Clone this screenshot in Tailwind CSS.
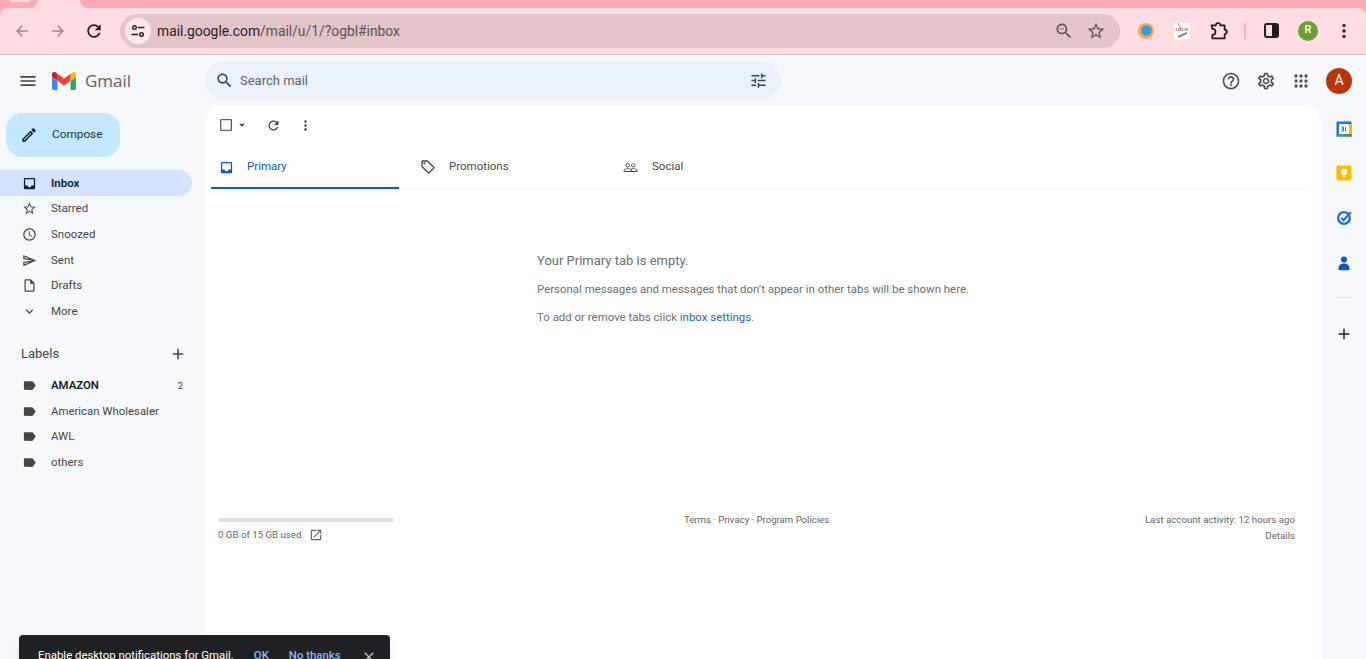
<!DOCTYPE html>
<html lang="en">
<head>
    <meta charset="UTF-8">
    <title>Inbox - Gmail</title>
    <script src="https://cdn.jsdelivr.net/npm/@tailwindcss/browser@4"></script>
</head>
<body class="bg-[#f6f8fc]">
<div class="relative flex h-[659px] w-[1366px] flex-col overflow-hidden font-['Roboto',sans-serif] antialiased">

    <div class="flex-none bg-[#ffa9b8]">
        <!-- tab strip -->
        <div class="flex h-2 bg-[#ffdce2]">
            <div class="h-full w-[38px] flex-none rounded-br-lg bg-[#ffa9b8]"><div class="ml-[10px] h-[2px] w-5 rounded-b-lg bg-[#ffdce2]"></div></div>
            <div class="w-[42px] flex-none"></div>
            <div class="flex-1 rounded-bl-lg bg-[#ffa9b8]"></div>
        </div>

        <!-- browser toolbar -->
        <div class="flex h-[47px] items-center rounded-t-lg border-b border-[#d9b8be] bg-[#ffdce2] pb-[1px]">
            <svg class="ml-[13px] h-[18px] w-[18px] fill-[#9c8a8e]" viewBox="0 0 24 24"><path d="M20 11H7.830l5.590-5.590L12 4l-8 8 8 8 1.410-1.410L7.830 13H20v-2z"/></svg>
            <svg class="ml-[18px] h-[18px] w-[18px] fill-[#9c8a8e]" viewBox="0 0 24 24"><path d="M12 4l-1.410 1.410L16.170 11H4v2h12.170l-5.580 5.590L12 20l8-8z"/></svg>
            <svg class="ml-[17px] h-5 w-5 fill-[#1f1a1c]" viewBox="0 0 24 24"><path d="M17.650 6.350C16.200 4.900 14.210 4 12 4c-4.420 0-7.990 3.580-7.990 8s3.570 8 7.990 8c3.730 0 6.840-2.550 7.730-6h-2.080c-.820 2.330-3.040 4-5.650 4-3.310 0-6-2.690-6-6s2.690-6 6-6c1.660 0 3.140.690 4.220 1.780L13 11h7V4l-2.350 2.350z"/></svg>

            <!-- address bar -->
            <div class="ml-4 flex h-[34px] w-[1000px] flex-none items-center rounded-full bg-[#e2c4c9] pl-[5px] pr-[14px]">
                <div class="flex h-[26px] w-[26px] flex-none items-center justify-center rounded-full bg-[#ffe9ed]">
                    <svg class="h-[18px] w-[18px]" viewBox="0 0 18 18" fill="none" stroke="#231c1f" stroke-width="1.400"><circle cx="5.500" cy="5.500" r="1.800"/><path d="M9 5.500h6.500M2.500 12.500H9"/><circle cx="12.500" cy="12.500" r="1.800"/></svg>
                </div>
                <div class="ml-[6px] pt-[1px] text-[13.850px] text-[#5e5054]"><span class="text-[#2a2023]">mail.google.com</span>/mail/u/1/?ogbl#inbox</div>
                <svg class="ml-auto h-5 w-5 fill-[#5f5558]" viewBox="0 0 24 24"><path d="M15.500 14h-.790l-.280-.270C15.410 12.590 16 11.110 16 9.500 16 5.910 13.090 3 9.500 3S3 5.910 3 9.500 5.910 16 9.500 16c1.610 0 3.090-.590 4.230-1.570l.270.280v.790l5 4.990L20.490 19l-4.990-5zm-6 0C7.010 14 5 11.990 5 9.500S7.010 5 9.500 5 14 7.010 14 9.500 11.990 14 9.500 14zM7 9h5v1H7z"/></svg>
                <svg class="ml-3 h-5 w-5 fill-[#5f5558]" viewBox="0 0 24 24"><path d="M22 9.240l-7.190-.620L12 2 9.190 8.630 2 9.240l5.460 4.730L5.820 21 12 17.270 18.180 21l-1.630-7.030L22 9.240zM12 15.400l-3.760 2.270 1-4.280-3.320-2.880 4.380-.380L12 6.100l1.710 4.040 4.380.380-3.320 2.880 1 4.280L12 15.400z"/></svg>
            </div>

            <!-- extensions -->
            <div class="ml-[18px] flex h-4 w-4 flex-none items-center justify-center rounded-full bg-[#f2a76a]"><div class="h-[9px] w-[9px] rounded-full bg-[#1ea5ee] ring-1 ring-[#e8743b]"></div></div>
            <svg class="ml-5 h-4 w-4 flex-none" viewBox="0 0 16 16"><rect width="16" height="16" fill="#fff"/><path d="M4 0l3 6" stroke="#8a8a8a" stroke-width="1"/><path d="M4 14l9-4" stroke="#8a8a8a" stroke-width="2"/><text x="8" y="8" text-anchor="middle" font-family="Liberation Serif, serif" font-size="3.600" font-weight="700" fill="#8a2a2a">LOG IN</text></svg>
            <svg class="ml-[18px] h-[21px] w-[21px] fill-none stroke-[#1f1a1c] stroke-2" stroke-linejoin="round" viewBox="0 0 24 24"><path d="M4 6h5a2.500 2.500 0 0 1 5 0h5v5a2.500 2.500 0 0 1 0 5v5H5v-4a3.500 3.500 0 0 0 0-7z"/></svg>
            <div class="ml-[15px] h-4 w-[2px] flex-none bg-[#ffa9b8]"></div>
            <div class="ml-[18px] flex h-[15px] w-[15px] flex-none overflow-hidden rounded-[3px] border-2 border-[#231c1f]"><div class="w-1/2"></div><div class="w-1/2 bg-[#231c1f]"></div></div>
            <div class="ml-[19px] flex h-5 w-5 flex-none items-center justify-center rounded-full bg-[#6b9f37] text-[11px] font-medium text-white">R</div>
            <svg class="ml-[16px] h-5 w-5 fill-[#1f1a1c]" viewBox="0 0 24 24"><circle cx="12" cy="5.500" r="2"/><circle cx="12" cy="12" r="2"/><circle cx="12" cy="18.500" r="2"/></svg>
        </div>
    </div>

    <!-- gmail header -->
    <div class="flex h-[51px] flex-none items-center">
        <svg class="ml-[18px] h-5 w-5 flex-none fill-[#444746]" viewBox="0 0 24 24"><path d="M3 18h18v-2H3v2zm0-5h18v-2H3v2zm0-7v2h18V6H3z"/></svg>
        <svg class="ml-[14px] h-[18px] w-6 flex-none" viewBox="52 42 88 66"><path fill="#4285f4" d="M58 108h14V74L52 59v43c0 3.320 2.690 6 6 6"/><path fill="#34a853" d="M120 108h14c3.320 0 6-2.690 6-6V59l-20 15"/><path fill="#fbbc04" d="M120 48v26l20-15v-8c0-7.420-8.470-11.650-14.400-7.200"/><path fill="#ea4335" d="M72 74V48l24 18 24-18v26L96 92"/><path fill="#c5221f" d="M52 51v8l20 15V48l-5.600-4.200c-5.940-4.450-14.400-.220-14.400 7.200"/></svg>
        <div class="ml-[9px] w-[111px] flex-none font-['Open_Sans',sans-serif] text-[17px] text-[#5f6368]">Gmail</div>
        <div class="ml-[9px] flex h-[39px] w-[576px] flex-none items-center rounded-full bg-[#eaf1fb] pl-[10px] pr-[13px]">
            <svg class="h-[19px] w-[19px] fill-[#444746]" viewBox="0 0 24 24"><path d="M15.500 14h-.790l-.280-.270C15.410 12.590 16 11.110 16 9.500 16 5.910 13.090 3 9.500 3S3 5.910 3 9.500 5.910 16 9.500 16c1.610 0 3.090-.590 4.230-1.570l.270.280v.790l5 4.990L20.490 19l-4.990-5zm-6 0C7.010 14 5 11.990 5 9.500S7.010 5 9.500 5 14 7.010 14 9.500 11.990 14 9.500 14z"/></svg>
            <div class="ml-[6px] pt-[1px] text-[13px] text-[#5f6368]">Search mail</div>
            <svg class="ml-auto h-[19px] w-[19px] fill-[#444746]" viewBox="0 0 24 24"><path d="M3 17v2h6v-2H3zM3 5v2h10V5H3zm10 16v-2h8v-2h-8v-2h-2v6h2zM7 9v2H3v2h4v2h2V9H7zm14 4v-2H11v2h10zm-6-4h2V7h4V5h-4V3h-2v6z"/></svg>
        </div>
        <svg class="ml-[440px] h-5 w-5 flex-none fill-[#4e5052]" viewBox="0 0 24 24"><path d="M11 18h2v-2h-2v2zm1-16C6.480 2 2 6.480 2 12s4.480 10 10 10 10-4.480 10-10S17.520 2 12 2zm0 18c-4.410 0-8-3.590-8-8s3.590-8 8-8 8 3.590 8 8-3.590 8-8 8zm0-14c-2.210 0-4 1.790-4 4h2c0-1.100.900-2 2-2s2 .900 2 2c0 2-3 1.750-3 5h2c0-2.250 3-2.500 3-5 0-2.210-1.790-4-4-4z"/></svg>
        <svg class="ml-[15px] h-5 w-5 flex-none fill-[#4e5052]" viewBox="0 0 24 24"><path d="M19.430 12.980c.040-.320.070-.640.070-.980 0-.340-.030-.660-.070-.980l2.110-1.650c.190-.150.240-.420.120-.640l-2-3.460c-.090-.160-.260-.250-.440-.250-.060 0-.120.010-.170.030l-2.490 1c-.520-.400-1.080-.730-1.690-.980l-.380-2.650C14.460 2.180 14.250 2 14 2h-4c-.250 0-.460.180-.490.420l-.380 2.650c-.610.250-1.170.590-1.690.980l-2.490-1c-.060-.020-.120-.030-.180-.030-.170 0-.340.090-.430.250l-2 3.460c-.130.220-.070.490.120.640l2.110 1.650c-.040.320-.070.650-.070.980 0 .330.030.660.070.980l-2.110 1.650c-.190.150-.240.420-.120.640l2 3.460c.090.160.260.250.440.250.060 0 .120-.010.170-.030l2.490-1c.520.400 1.080.730 1.690.980l.380 2.650c.030.240.240.420.490.420h4c.250 0 .460-.180.490-.420l.380-2.650c.610-.250 1.170-.590 1.690-.980l2.490 1c.060.020.120.030.180.030.170 0 .340-.090.430-.250l2-3.460c.120-.220.070-.490-.120-.640l-2.110-1.650zm-1.980-1.710c.040.310.050.520.050.730 0 .210-.020.430-.050.730l-.140 1.130.890.700 1.080.84-.700 1.210-1.270-.510-1.040-.420-.900.680c-.430.320-.840.560-1.250.730l-1.060.430-.160 1.130-.200 1.350h-1.400l-.190-1.350-.160-1.130-1.060-.43c-.430-.180-.830-.410-1.230-.710l-.910-.700-1.060.430-1.270.510-.700-1.210 1.080-.84.890-.700-.140-1.130c-.030-.310-.050-.540-.050-.740s.020-.430.050-.730l.140-1.130-.890-.700-1.080-.84.700-1.210 1.270.510 1.040.42.900-.68c.430-.320.840-.560 1.250-.730l1.060-.43.160-1.130.200-1.350h1.390l.190 1.350.160 1.130 1.060.43c.430.180.830.410 1.230.710l.910.700 1.060-.43 1.270-.510.700 1.210-1.070.85-.89.700.140 1.130zM12 8c-2.210 0-4 1.790-4 4s1.790 4 4 4 4-1.790 4-4-1.790-4-4-4zm0 6c-1.100 0-2-.900-2-2s.900-2 2-2 2 .900 2 2-.900 2-2 2z"/></svg>
        <svg class="ml-[15px] h-5 w-5 flex-none fill-[#4e5052]" viewBox="0 0 24 24"><circle cx="6" cy="6" r="2"/><circle cx="12" cy="6" r="2"/><circle cx="18" cy="6" r="2"/><circle cx="6" cy="12" r="2"/><circle cx="12" cy="12" r="2"/><circle cx="18" cy="12" r="2"/><circle cx="6" cy="18" r="2"/><circle cx="12" cy="18" r="2"/><circle cx="18" cy="18" r="2"/></svg>
        <div class="ml-[15px] flex h-[26px] w-[26px] flex-none items-center justify-center rounded-full bg-[#b8360a] text-[14px] text-white">A</div>
    </div>

    <div class="flex min-h-0 flex-1">
        <!-- left nav -->
        <div class="w-[205px] flex-none">
            <div class="ml-[6px] mt-[7px] flex h-11 w-[114px] items-center rounded-2xl bg-[#c2e7ff] pl-[14px]">
                <svg class="h-[18px] w-[18px] fill-[#001d35]" viewBox="0 0 24 24"><path d="M14.060 9.020l.920.920L5.920 19H5v-.920l9.060-9.060M17.660 3c-.250 0-.510.100-.700.290l-1.830 1.830 3.750 3.750 1.830-1.830c.390-.390.390-1.020 0-1.410l-2.340-2.340c-.200-.200-.450-.290-.710-.290zm-3.600 3.190L3 17.250V21h3.750L17.810 9.940l-3.750-3.750z"/></svg>
                <span class="ml-[14px] text-[11.800px] text-[#1f3347]">Compose</span>
            </div>
            <div class="mt-[13px] w-[192px] text-[11.500px] text-[#444746]">
                <div class="flex h-[26px] items-center rounded-r-full bg-[#d3e3fd] pl-[22px] font-semibold text-[#041e49]">
                    <svg class="h-[15px] w-[15px] flex-none fill-[#041e49]" viewBox="0 0 24 24"><path d="M19 3H5c-1.100 0-2 .900-2 2v14c0 1.100.900 2 2 2h14c1.100 0 2-.900 2-2V5c0-1.100-.900-2-2-2zm0 12h-4c0 1.660-1.340 3-3 3s-3-1.340-3-3H5V5h14v10z"/></svg>
                    <span class="ml-[14px] pt-[1px]">Inbox</span>
                </div>
                <div class="flex h-[25.700px] items-center pl-[22px]">
                    <svg class="h-[15px] w-[15px] flex-none fill-[#444746]" viewBox="0 0 24 24"><path d="M22 9.240l-7.190-.620L12 2 9.190 8.630 2 9.240l5.460 4.730L5.820 21 12 17.270 18.180 21l-1.630-7.030L22 9.240zM12 15.400l-3.760 2.270 1-4.280-3.320-2.880 4.380-.380L12 6.100l1.710 4.040 4.380.380-3.320 2.880 1 4.280L12 15.400z"/></svg>
                    <span class="ml-[14px]">Starred</span>
                </div>
                <div class="flex h-[25.700px] items-center pl-[22px]">
                    <svg class="h-[15px] w-[15px] flex-none fill-[#444746]" viewBox="0 0 24 24"><path d="M11.990 2C6.470 2 2 6.480 2 12s4.470 10 9.990 10C17.520 22 22 17.520 22 12S17.520 2 11.990 2zM12 20c-4.420 0-8-3.580-8-8s3.580-8 8-8 8 3.580 8 8-3.580 8-8 8zm.500-13H11v6l5.250 3.150.750-1.230-4.500-2.670z"/></svg>
                    <span class="ml-[14px]">Snoozed</span>
                </div>
                <div class="flex h-[25.700px] items-center pl-[22px]">
                    <svg class="h-[15px] w-[15px] flex-none fill-[#444746]" viewBox="0 0 24 24"><path d="M4.010 6.030l7.510 3.220-7.520-1 .010-2.220m7.500 8.720L4 17.970v-2.220l7.510-1M2.010 3L2 10l15 2-15 2 .010 7L23 12 2.010 3z"/></svg>
                    <span class="ml-[14px]">Sent</span>
                </div>
                <div class="flex h-[25.700px] items-center pl-[22px]">
                    <svg class="h-[15px] w-[15px] flex-none fill-[#444746]" viewBox="0 0 24 24"><path d="M14 2H6c-1.100 0-1.990.900-1.990 2L4 20c0 1.100.890 2 1.990 2H18c1.100 0 2-.900 2-2V8l-6-6zM6 20V4h7v5h5v11H6z"/></svg>
                    <span class="ml-[14px]">Drafts</span>
                </div>
                <div class="flex h-[25.700px] items-center pl-[22px]">
                    <svg class="h-[15px] w-[15px] flex-none fill-[#444746]" viewBox="0 0 24 24"><path d="M16.590 8.590L12 13.170 7.410 8.590 6 10l6 6 6-6z"/></svg>
                    <span class="ml-[14px]">More</span>
                </div>
            </div>

            <div class="mt-[20px] flex w-[192px] items-center justify-between pl-[21px] pr-[5px] text-[13px] text-[#444746]">
                <span>Labels</span>
                <svg class="h-[18px] w-[18px] fill-[#444746]" viewBox="0 0 24 24"><path d="M19 13h-6v6h-2v-6H5v-2h6V5h2v6h6v2z"/></svg>
            </div>
            <div class="mt-[9px] w-[192px] text-[11.400px] text-[#444746]">
                <div class="flex h-[25.500px] items-center pl-[22px] pr-[9px] font-semibold text-[#1f1f1f]">
                    <svg class="h-[15px] w-[15px] flex-none fill-[#444746]" viewBox="0 0 24 24"><path d="M17.630 5.840C17.270 5.330 16.670 5 16 5L5 5.010C3.900 5.010 3 5.900 3 7v10c0 1.100.900 1.990 2 1.990L16 19c.670 0 1.270-.330 1.630-.840L22 12l-4.370-6.160z"/></svg>
                    <span class="ml-[14px]">AMAZON</span>
                    <span class="ml-auto text-[9.500px] font-normal text-[#444746]">2</span>
                </div>
                <div class="flex h-[25.500px] items-center pl-[22px]">
                    <svg class="h-[15px] w-[15px] flex-none fill-[#444746]" viewBox="0 0 24 24"><path d="M17.630 5.840C17.270 5.330 16.670 5 16 5L5 5.010C3.900 5.010 3 5.900 3 7v10c0 1.100.900 1.990 2 1.990L16 19c.670 0 1.270-.330 1.630-.840L22 12l-4.370-6.160z"/></svg>
                    <span class="ml-[14px]">American Wholesaler</span>
                </div>
                <div class="flex h-[25.500px] items-center pl-[22px]">
                    <svg class="h-[15px] w-[15px] flex-none fill-[#444746]" viewBox="0 0 24 24"><path d="M17.630 5.840C17.270 5.330 16.670 5 16 5L5 5.010C3.900 5.010 3 5.900 3 7v10c0 1.100.900 1.990 2 1.990L16 19c.670 0 1.270-.330 1.630-.840L22 12l-4.370-6.160z"/></svg>
                    <span class="ml-[14px]">AWL</span>
                </div>
                <div class="flex h-[25.500px] items-center pl-[22px] pt-[1px]">
                    <svg class="h-[15px] w-[15px] flex-none fill-[#444746]" viewBox="0 0 24 24"><path d="M17.630 5.840C17.270 5.330 16.670 5 16 5L5 5.010C3.900 5.010 3 5.900 3 7v10c0 1.100.900 1.990 2 1.990L16 19c.670 0 1.270-.330 1.630-.840L22 12l-4.370-6.160z"/></svg>
                    <span class="ml-[14px]">others</span>
                </div>
            </div>
        </div>

        <!-- main panel -->
        <div class="w-[1116px] flex-none rounded-t-2xl bg-white">
            <div class="flex h-10 items-center pb-[2px] pl-[13px]">
                <svg class="h-4 w-4 fill-[#5f6368]" viewBox="0 0 24 24"><path d="M19 5v14H5V5h14m0-2H5c-1.100 0-2 .900-2 2v14c0 1.100.900 2 2 2h14c1.100 0 2-.900 2-2V5c0-1.100-.900-2-2-2z"/></svg>
                <svg class="ml-[1px] h-[14px] w-[14px] fill-[#444746]" viewBox="0 0 24 24"><path d="M7 10l5 5 5-5z"/></svg>
                <svg class="ml-[17px] h-[15px] w-[15px] fill-[#444746]" viewBox="0 0 24 24"><path d="M17.650 6.350C16.200 4.900 14.210 4 12 4c-4.420 0-7.990 3.580-7.990 8s3.570 8 7.990 8c3.730 0 6.840-2.550 7.730-6h-2.080c-.820 2.330-3.040 4-5.650 4-3.310 0-6-2.690-6-6s2.690-6 6-6c1.660 0 3.140.690 4.220 1.780L13 11h7V4l-2.350 2.350z"/></svg>
                <svg class="ml-[17px] h-[15px] w-[15px] fill-[#444746]" viewBox="0 0 24 24"><circle cx="12" cy="5.500" r="2"/><circle cx="12" cy="12" r="2"/><circle cx="12" cy="18.500" r="2"/></svg>
            </div>
            <div class="ml-[6px] mr-3 flex h-[43px] border-b border-[#f1f3f4] text-[11.500px]">
                <div class="-mb-[1px] flex w-[188px] flex-none items-center border-b-2 border-[#0b57d0] pl-2 pt-[1px] text-[#0b57d0]">
                    <svg class="h-[15px] w-[15px] flex-none fill-[#0b57d0]" viewBox="0 0 24 24"><path d="M19 3H5c-1.100 0-2 .900-2 2v14c0 1.100.900 2 2 2h14c1.100 0 2-.900 2-2V5c0-1.100-.900-2-2-2zm0 12h-4c0 1.660-1.340 3-3 3s-3-1.340-3-3H5V5h14v10z"/></svg>
                    <span class="ml-[13px]">Primary</span>
                </div>
                <div class="flex w-[212px] flex-none items-center pl-[21px] text-[#444746]">
                    <svg class="h-4 w-4 flex-none fill-[#444746]" viewBox="0 0 24 24"><path d="M21.410 11.580l-9-9C12.050 2.220 11.550 2 11 2H4c-1.100 0-2 .900-2 2v7c0 .550.220 1.050.590 1.420l9 9c.360.360.860.580 1.410.580s1.050-.220 1.410-.590l7-7c.370-.360.590-.860.590-1.410s-.230-1.060-.590-1.420zM13 20.010L4 11V4h7v-.010l9 9-7 7.020z"/><circle cx="6.500" cy="6.500" r="1.500"/></svg>
                    <span class="ml-[13px]">Promotions</span>
                </div>
                <div class="flex items-center pl-[12px] text-[#444746]">
                    <svg class="h-[15px] w-[15px] flex-none fill-[#444746]" viewBox="0 0 24 24"><path d="M16.500 13c-1.200 0-3.070.340-4.500 1-1.430-.670-3.300-1-4.500-1C5.330 13 1 14.080 1 16.250V19h22v-2.750c0-2.170-4.330-3.250-6.500-3.250zm-4 4.500h-10v-1.250c0-.540 2.560-1.750 5-1.750s5 1.210 5 1.750v1.250zm9 0H14v-1.250c0-.460-.200-.860-.520-1.220.880-.300 1.960-.530 3.020-.530 2.440 0 5 1.210 5 1.750v1.250zM7.500 12c1.930 0 3.500-1.570 3.500-3.500S9.430 5 7.500 5 4 6.570 4 8.500 5.570 12 7.500 12zm0-5.500c1.100 0 2 .900 2 2s-.900 2-2 2-2-.900-2-2 .900-2 2-2zm9 5.500c1.930 0 3.500-1.570 3.500-3.500S18.430 5 16.500 5 13 6.570 13 8.500s1.570 3.500 3.500 3.500zm0-5.500c1.100 0 2 .900 2 2s-.900 2-2 2-2-.900-2-2 .900-2 2-2z"/></svg>
                    <span class="ml-[14px]">Social</span>
                </div>
            </div>

            <!-- empty tab message -->
            <div class="ml-[332px] h-[329px] pt-[63px] text-[11.450px] text-[#6b6f73]">
                <div class="text-[13px] leading-[18px]">Your Primary tab is empty.</div>
                <div class="mt-[11px] leading-[16px]">Personal messages and messages that don’t appear in other tabs will be shown here.</div>
                <div class="mt-[12px] leading-[16px]">To add or remove tabs click <span class="text-[#2a64c8]">inbox settings</span>.</div>
            </div>

            <!-- footer -->
            <div class="flex items-start pl-[13px] pr-[26px] text-[9.700px] text-[#5f6368]">
                <div class="w-[176px] flex-none">
                    <div class="h-1 rounded-full bg-[#dadce0]"></div>
                    <div class="mt-[6px] flex items-center">
                        <span>0 GB of 15 GB used</span>
                        <svg class="ml-2 h-[14px] w-[14px] fill-[#5f6368]" viewBox="0 0 24 24"><path d="M19 19H5V5h7V3H5c-1.110 0-2 .900-2 2v14c0 1.100.890 2 2 2h14c1.100 0 2-.900 2-2v-7h-2v7zM14 3v2h3.590l-9.830 9.830 1.410 1.410L19 6.410V10h2V3h-7z"/></svg>
                    </div>
                </div>
                <div class="-mt-[6px] ml-[290px] text-[9.600px] leading-[16px]">Terms · Privacy · Program Policies</div>
                <div class="-mt-[6px] ml-auto text-right leading-[15.500px]">
                    <div>Last account activity: 12 hours ago</div>
                    <div>Details</div>
                </div>
            </div>
        </div>

        <!-- right side panel -->
        <div class="flex w-[45px] flex-none flex-col items-center pl-[1px]">
            <svg class="mt-[15px] h-4 w-4" viewBox="0 0 16 16"><rect x="0.500" y="0.500" width="15" height="15" rx="1" fill="#1a73e8"/><rect x="3" y="3" width="10" height="10" fill="#fff"/><rect x="13" y="3" width="2.500" height="10" fill="#fbbc04"/><rect x="0.500" y="13" width="15" height="2.500" fill="#34a853"/><rect x="13" y="13" width="2.500" height="2.500" fill="#ea4335"/><path d="M5.500 6h2v4h-2M5.500 8h2M9.500 6v4" fill="none" stroke="#1a73e8" stroke-width="1"/></svg>
            <svg class="mt-7 h-4 w-4" viewBox="0 0 16 16"><rect x="0.500" y="0.500" width="15" height="15" rx="1.500" fill="#fbbc04"/><circle cx="8" cy="7" r="3" fill="#fff"/><rect x="6.500" y="10.500" width="3" height="1.500" fill="#fff"/></svg>
            <svg class="mt-7 h-[17px] w-[17px]" viewBox="0 0 16 16"><circle cx="7.500" cy="8.500" r="5.500" fill="none" stroke="#1a73e8" stroke-width="2.200"/><path d="M5 8.500l2 2 7-7.500" fill="none" stroke="#1a73e8" stroke-width="2"/></svg>
            <svg class="mt-[29px] h-4 w-4" viewBox="0 0 16 16"><circle cx="8" cy="4.500" r="3" fill="#0b57d0"/><path d="M2.500 14c0-3.800 2.200-5.500 5.500-5.500s5.500 1.700 5.500 5.500c0 .800-.500 1.200-1.200 1.200H3.700c-.700 0-1.200-.400-1.200-1.200z" fill="#0b57d0"/></svg>
            <div class="mt-[26px] h-[1px] w-4 bg-[#dadce0]"></div>
            <svg class="mt-[27px] h-[18px] w-[18px] fill-[#1f1f1f]" viewBox="0 0 24 24"><path d="M19 13h-6v6h-2v-6H5v-2h6V5h2v6h6v2z"/></svg>
        </div>
    </div>

    <!-- notification toast, runs off the bottom of the window -->
    <div class="absolute left-[19px] top-[635px] flex h-12 w-[371px] items-start rounded-[4px] bg-[#202124] pl-[19px] pt-[12px] text-[11.400px] leading-[16px] text-white shadow-lg">
        <span>Enable desktop notifications for Gmail.</span>
        <span class="ml-[20px] font-medium text-[#8ab4f8]">OK</span>
        <span class="ml-[20px] font-medium text-[#8ab4f8]">No thanks</span>
        <svg class="ml-[20px] mt-[2px] h-[16px] w-[16px] fill-[#bdc1c6]" viewBox="0 0 24 24"><path d="M19 6.410L17.590 5 12 10.590 6.410 5 5 6.410 10.590 12 5 17.590 6.410 19 12 13.410 17.590 19 19 17.590 13.410 12z"/></svg>
    </div>
</div>
</body>
</html>
